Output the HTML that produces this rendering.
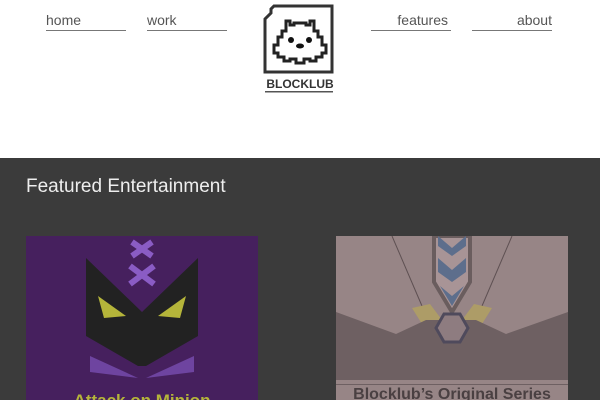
<!DOCTYPE html>
<html><head><style>
*{margin:0;padding:0;box-sizing:border-box}
body{width:600px;height:400px;overflow:hidden;background:#fff;font-family:"Liberation Sans",sans-serif;position:relative}
.nav{position:absolute;top:12px;font-size:14px;color:#555;border-bottom:1.5px solid #777;width:80px;height:19px;line-height:16px}
.dark{position:absolute;top:158px;left:0;width:600px;height:242px;background:#3b3b3b}
h2{position:absolute;top:176px;left:26px;color:#eee;font-weight:normal;font-size:19px}
.card{position:absolute;top:236px;width:232px;height:164px;overflow:hidden}
</style></head><body>
<div class="nav" style="left:46px">home</div>
<div class="nav" style="left:147px">work</div>
<div class="nav" style="left:371px;text-align:right;padding-right:3px">features</div>
<div class="nav" style="left:472px;text-align:right">about</div>

<svg style="position:absolute;left:262px;top:3px" width="76" height="92" viewBox="0 0 76 92">
<path d="M12 3 H70 V69 H3 V16 L9 10 V6 Z" fill="none" stroke="#333" stroke-width="3"/>
<path d="M24 28 V18 H28 V22 H32 V20 H44 V22 H48 V18 H52 V28 H56 V34 H60 V42 H64 V50 H60 V54 H54 V58 H48 V56 H42 V60 H34 V56 H28 V58 H22 V54 H16 V50 H12 V42 H16 V34 H20 V28 Z" fill="#fff" stroke="#222" stroke-width="3"/>
<circle cx="29" cy="37" r="3" fill="#111"/><circle cx="47" cy="37" r="3" fill="#111"/>
<ellipse cx="38" cy="43" rx="4" ry="2.5" fill="#111"/>
<text x="38" y="85" text-anchor="middle" font-family="Liberation Sans" font-weight="bold" font-size="12" fill="#333">BLOCKLUB</text>
<rect x="3" y="88" width="68" height="1.5" fill="#555"/>
</svg>

<div class="dark"></div>
<h2>Featured Entertainment</h2>

<div class="card" style="left:26px;background:#46205e">
<svg width="232" height="164">
<path d="M106 6 L126 20 M126 6 L106 20 M104 30 L128 48 M128 30 L104 48" stroke="#8a5cc4" stroke-width="6"/>
<path d="M60 22 L116 76 L172 22 L172 100 L120 130 L112 130 L60 100 Z" fill="#222"/>
<path d="M72 60 L100 80 L78 82 Z M160 60 L132 80 L154 82 Z" fill="#b5b53a"/>
<path d="M64 120 L112 142 L64 136 Z M168 120 L120 142 L168 136 Z" fill="#6e44a0"/>
<text x="116" y="170" text-anchor="middle" font-size="17" font-weight="bold" fill="#b5b53a" font-family="Liberation Sans">Attack on Minion</text>
</svg></div>

<div class="card" style="left:336px;background:#978586">
<svg width="232" height="164">
<line x1="56" y1="0" x2="86" y2="70" stroke="#5e5052" stroke-width="1"/>
<line x1="176" y1="0" x2="146" y2="70" stroke="#5e5052" stroke-width="1"/>
<path d="M98 0 L98 46 L116 76 L134 46 L134 0 Z" fill="#a89496" stroke="#6a5d5e" stroke-width="4"/>
<path d="M102 0 L116 12 L130 0 V10 L116 20 L102 10Z M102 22 L116 34 L130 22 V36 L116 46 L102 36Z M104 50 L116 60 L128 50 L116 70Z" fill="#5d6e8c"/>
<path d="M76 72 L94 68 L106 84 L86 88 Z M156 72 L138 68 L126 84 L146 88Z" fill="#ad9c67"/>
<path d="M0 76 L60 98 L90 84 L140 84 L170 98 L232 76 L232 144 L0 144Z" fill="#6e6062"/>
<polygon points="108,78 124,78 132,92 124,106 108,106 100,92" fill="#8e7c80" stroke="#4f4a5c" stroke-width="3"/>
<rect x="0" y="148" width="232" height="1" fill="#6e6062"/>
<text x="116" y="163" text-anchor="middle" font-size="16" font-weight="bold" fill="#4a4042" font-family="Liberation Sans">Blocklub’s Original Series</text>
</svg></div>
</body></html>
